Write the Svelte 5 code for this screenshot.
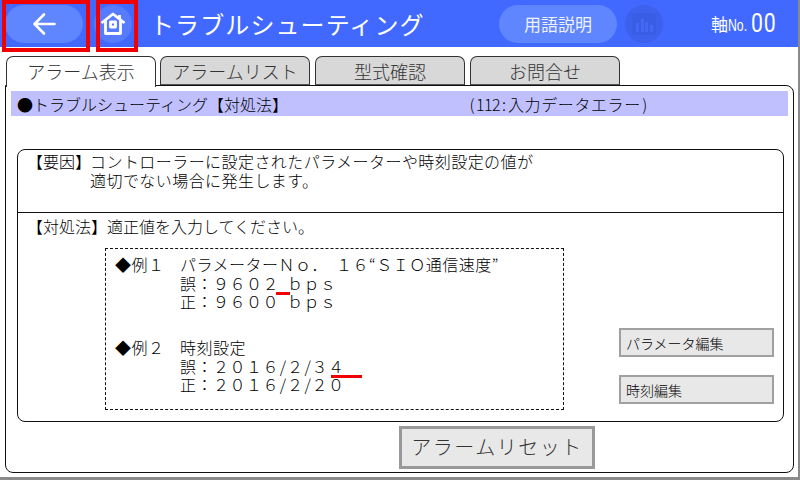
<script>
	const tabs = ["アラーム表示", "アラームリスト", "型式確認", "お問合せ"];
</script>

<div class="screen">
	<header class="topbar">
		<div class="nav-slot back">
			<span class="pill back-pill">
				<svg width="28" height="28" viewBox="0 0 28 28" fill="none" stroke="#fff" stroke-width="2.6" stroke-linecap="round" stroke-linejoin="round">
					<path d="M24.500 14H4.500M14 4.500L4.500 14L14 23.500" />
				</svg>
			</span>
		</div>
		<div class="nav-slot home">
			<span class="home-circle">
				<svg width="26" height="24" viewBox="0 0 26 24" fill="none" stroke="#fff" stroke-width="2.8" stroke-linejoin="round">
					<path d="M1.500 11L13 2L24.500 11M5.500 8.500V21.500H20.500V8.500M19.500 3V6.500" />
					<rect x="10.500" y="10" width="5" height="5" />
				</svg>
			</span>
		</div>
		<h1>トラブルシューティング</h1>
		<span class="glossary">用語説明</span>
		<span class="chart">
			<svg width="24" height="22" viewBox="0 0 24 22">
				<rect x="0" y="0" width="24" height="22" rx="3" fill="#3a5de6" />
				<rect x="4" y="10" width="3" height="9" fill="#4468f4" />
				<rect x="9" y="6" width="3" height="13" fill="#4468f4" />
				<rect x="13" y="9" width="3" height="10" fill="#4468f4" />
				<rect x="18" y="12" width="3" height="7" fill="#4468f4" />
			</svg>
		</span>
		<span class="axis">軸<small>No.</small></span>
		<span class="axis-num">00</span>
	</header>

	<nav class="tabs">
		{#each tabs as tab, i}
			<span class="tab" class:active={i === 0}>{tab}</span>
		{/each}
	</nav>

	<main class="panel">
		<div class="title-bar">
			<span class="title-left">●トラブルシューティング【対処法】</span>
			<span class="title-code">{#each "(112:" as c}<span class="half">{c}</span>{/each}入力データエラー<span class="half">)</span></span>
		</div>

		<section class="detail">
			<div class="cause">
				<span class="cause-label">【要因】</span>
				<p>コントローラーに設定されたパラメーターや時刻設定の値が<br />適切でない場合に発生します。</p>
			</div>
			<div class="remedy">
				<p class="remedy-head">【対処法】適正値を入力してください。</p>
				<div class="remedy-body">
					<div class="examples">
						<div class="example">
							<span class="ex-label">◆例１</span>
							<div>
								<div>パラメーターＮｏ．<span class="half">&nbsp;</span>１６“ＳＩＯ通信速度”</div>
								<div>誤：９６０<span class="mark short">２</span><span class="half">&nbsp;</span>ｂｐｓ</div>
								<div>正：９６００<span class="half">&nbsp;</span>ｂｐｓ</div>
							</div>
						</div>
						<div class="example">
							<span class="ex-label">◆例２</span>
							<div>
								<div>時刻設定</div>
								<div>誤：２０１６<span class="half">/</span>２<span class="half">/</span>３<span class="mark long">４</span></div>
								<div>正：２０１６<span class="half">/</span>２<span class="half">/</span>２０</div>
							</div>
						</div>
					</div>
					<div class="side-buttons">
						<button>パラメータ編集</button>
						<button>時刻編集</button>
					</div>
				</div>
			</div>
		</section>

		<div class="footer">
			<button class="reset">アラームリセット</button>
		</div>
	</main>

	<div class="focus focus-back"></div>
	<div class="focus focus-home"></div>
</div>

<style>
	:global(body) {
		margin: 0;
		background: #fff;
	}

	.screen {
		position: relative;
		width: 800px;
		height: 480px;
		box-sizing: border-box;
		overflow: hidden;
		background: #fff;
		border-right: 2px solid #8a8a8a;
		border-bottom: 3px solid #8a8a8a;
		font-family: "Noto Sans CJK JP", "Liberation Sans", sans-serif;
		font-weight: 300;
		color: #000;
	}

	/* half-width cell, as in a fixed-pitch font */
	.half {
		display: inline-block;
		width: 8px;
		text-align: center;
		line-height: 1;
		letter-spacing: 0;
	}

	/* blue title bar */
	.topbar {
		display: flex;
		align-items: center;
		height: 47px;
		background: #4169ff;
		color: #fff;
	}

	.nav-slot {
		display: flex;
		align-items: center;
		justify-content: center;
	}

	.back {
		width: 88px;
	}

	.back-pill {
		display: flex;
		align-items: center;
		justify-content: center;
		width: 78px;
		height: 38px;
		border-radius: 19px;
		background: #5f85ff;
	}

	.home {
		width: 48px;
		margin-left: 1px;
	}

	.home-circle {
		display: flex;
		align-items: center;
		justify-content: center;
		width: 38px;
		height: 38px;
		border-radius: 50%;
		background: #567bff;
	}

	h1 {
		margin: 0 0 0 13px;
		width: 349px;
		font-size: 24px;
		font-weight: 400;
		letter-spacing: 1.100px;
		white-space: nowrap;
	}

	.glossary {
		width: 118px;
		height: 38px;
		line-height: 37px;
		border-radius: 19px;
		background: #5f85ff;
		text-align: center;
		font-size: 17px;
		font-weight: 400;
		color: #eef2ff;
	}

	.chart {
		display: flex;
		align-items: center;
		justify-content: center;
		width: 38px;
		height: 38px;
		margin-left: 8px;
		border-radius: 50%;
		background: #3d60ed;
	}

	.axis {
		margin-left: 48px;
		font-size: 17px;
		font-weight: 400;
		white-space: nowrap;
	}

	.axis small {
		display: inline-block;
		width: 18px;
		font-size: 17px;
		transform: scaleX(0.72);
		transform-origin: left;
		font-family: "Liberation Sans", sans-serif;
	}

	.axis-num {
		margin-left: 5px;
		font-family: Roboto, sans-serif;
		font-weight: 400;
		font-size: 25px;
		letter-spacing: 1px;
		display: inline-block;
		transform: scaleX(0.85);
		transform-origin: left;
	}

	/* tabs */
	.tabs {
		display: flex;
		gap: 5px;
		height: 29px;
		margin: 9px 0 0 6px;
		position: relative;
		z-index: 1;
	}

	.tab {
		box-sizing: border-box;
		width: 150px;
		height: 29px;
		padding-top: 1px;
		border: 1px solid #333;
		border-bottom: 1px solid #555;
		border-radius: 7px 7px 0 0;
		background: #d8d8d8;
		color: #333;
		text-align: center;
		font-size: 18px;
		line-height: 26px;
		white-space: nowrap;
	}

	.tab.active {
		height: 31px;
		margin-right: -1px;
		background: #fff;
		border-bottom: none;
	}

	/* main panel */
	.panel {
		box-sizing: border-box;
		width: 789px;
		height: 388px;
		margin-left: 5px;
		padding: 5px 5px 0;
		border: 1px solid #111;
		border-radius: 0 8px 8px 8px;
		background: #fff;
	}

	.title-bar {
		display: flex;
		align-items: center;
		height: 25px;
		background: #c0c0ff;
		font-size: 16px;
		white-space: nowrap;
	}

	.title-left {
		width: 451px;
		padding-left: 6px;
	}

	.title-code {
		letter-spacing: 0.600px;
	}

	.detail {
		box-sizing: border-box;
		height: 273px;
		margin: 33px 0 0 6px;
		width: 767px;
		border: 1px solid #111;
		border-radius: 8px;
		font-size: 16px;
		line-height: 19px;
	}

	.detail p {
		margin: 0;
	}

	.cause {
		display: flex;
		height: 63px;
		box-sizing: border-box;
		padding: 2px 0 0 9px;
		border-bottom: 1px solid #111;
	}

	.cause p {
		letter-spacing: 0.440px;
	}

	.cause-label {
		width: 63px;
		white-space: nowrap;
	}

	.remedy-head {
		padding: 4px 0 0 9px;
		height: 32px;
		box-sizing: border-box;
		white-space: nowrap;
	}

	.remedy-body {
		display: flex;
		align-items: flex-start;
	}

	.examples {
		box-sizing: border-box;
		width: 459px;
		height: 162px;
		margin: 3px 0 0 87px;
		padding: 6px 0 0 9px;
		border: 1px dashed #111;
		letter-spacing: 0.500px;
	}

	.example {
		display: flex;
		line-height: 18.500px;
		white-space: nowrap;
		height: 83px;
	}

	.ex-label {
		width: 65px;
	}

	.mark {
		position: relative;
	}

	.mark::after {
		content: "";
		position: absolute;
		bottom: 0;
		height: 3px;
		background: #f00000;
	}

	.mark.short::after {
		left: 13px;
		width: 14px;
	}

	.mark.long::after {
		left: 3px;
		width: 31px;
	}

	.side-buttons {
		display: flex;
		flex-direction: column;
		gap: 18px;
		margin: 83px 0 0 55px;
	}

	button {
		box-sizing: border-box;
		font-family: inherit;
		font-weight: 300;
		color: #000;
		background: #e8e8e8;
		border: 2px solid #a0a0a0;
		padding: 0;
		cursor: pointer;
	}

	.side-buttons button {
		width: 155px;
		height: 29px;
		padding-left: 5px;
		text-align: left;
		font-size: 14px;
		line-height: 24px;
	}

	.footer {
		display: flex;
		margin: 4px 0 0 388px;
	}

	.reset {
		width: 196px;
		height: 43px;
		padding-bottom: 3px;
		border: 3px solid #999;
		font-size: 20px;
		letter-spacing: 1.500px;
		color: #333;
		white-space: nowrap;
	}

	/* red highlight frames lying over the bar */
	.focus {
		position: absolute;
		top: 0;
		height: 52px;
		box-sizing: border-box;
		border: 4px solid #f00000;
	}

	.focus-back {
		left: 2px;
		width: 88px;
	}

	.focus-home {
		left: 96px;
		width: 42px;
	}
</style>
